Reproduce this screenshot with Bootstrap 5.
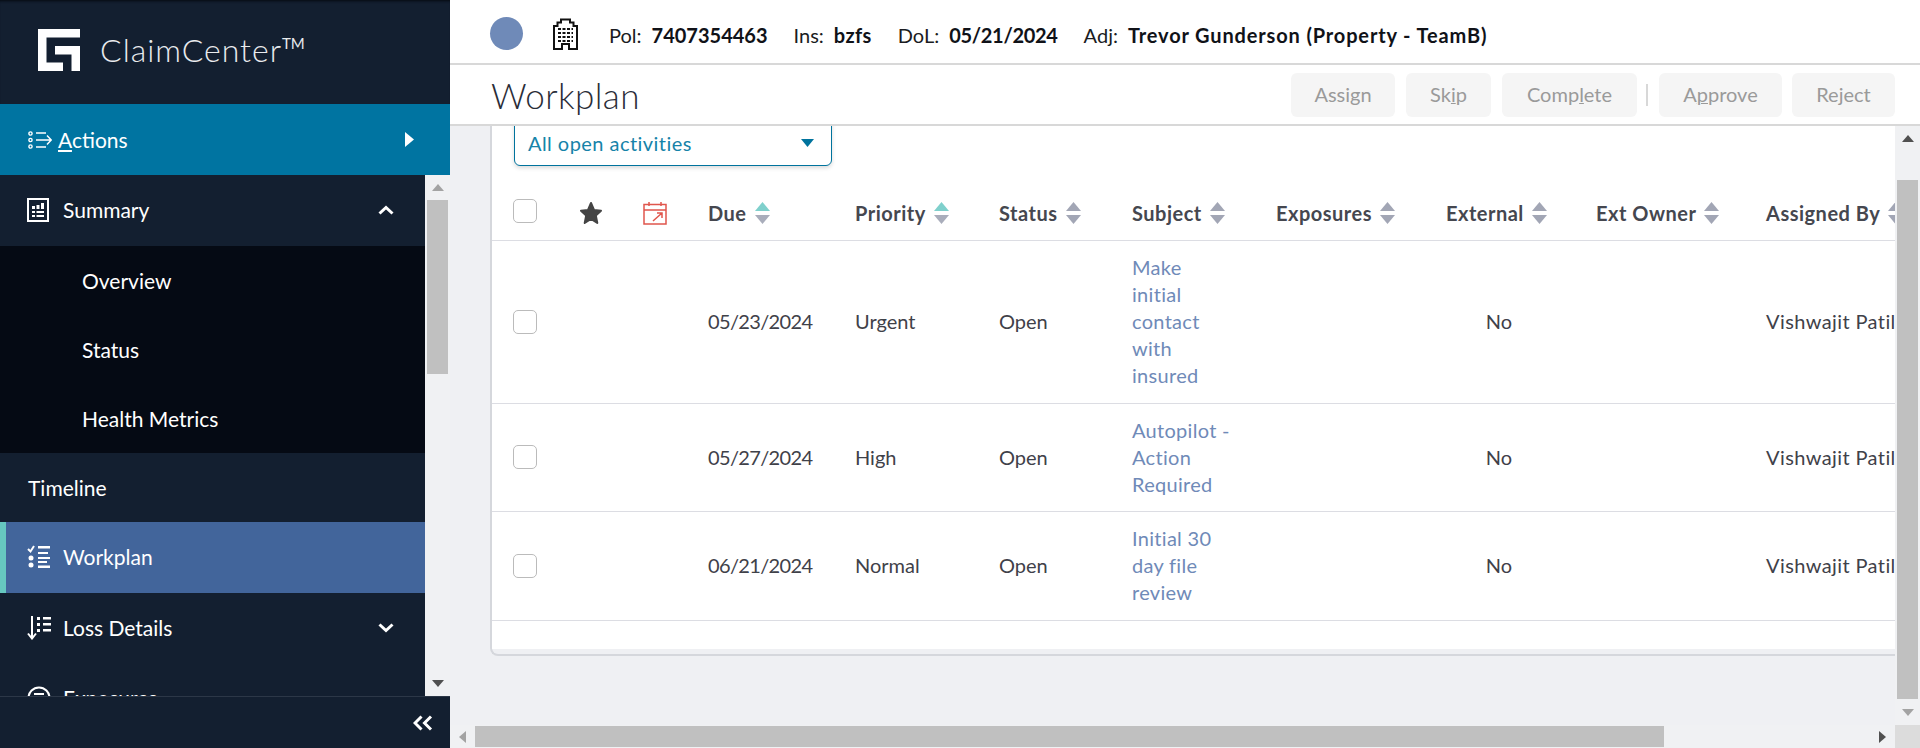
<!DOCTYPE html>
<html lang="en">
<head>
<meta charset="utf-8">
<title>Workplan</title>
<link href="https://cdn.jsdelivr.net/npm/bootstrap@5.3.0/dist/css/bootstrap.min.css" rel="stylesheet">
<style>
html,body{height:100%;overflow:hidden}
body{font-family:"Lato","Liberation Sans",sans-serif;font-size:20px;line-height:27px;background:#eff0f3;color:#3f4149}
.app-side{width:450px;flex:none;background:#131f30;color:#fff;height:748px;font-size:21px}
.side-brand{height:104px;padding:29px 0 0 38px;gap:20px;box-shadow:inset 0 3px 3px -2px #05080f}
.brand-name{font-weight:300;font-size:32px;line-height:38px;letter-spacing:1px;color:#e9ebee;margin-top:2px}
.brand-name sup{font-size:15px;top:-.85em;letter-spacing:0;font-weight:400}
.side-actions{height:71px;background:#0074a1;padding:0 36px 0 28px}
.side-actions .lbl{margin-left:6px;padding-bottom:1px}
.side-mid{height:521px}
.side-nav{width:425px;overflow:hidden}
.nav-row{height:71px;padding:0 31px 2px 27px;gap:14px;flex:none}
.nav-cut{padding-bottom:4px;gap:12px}
.nav-plain{height:69px;padding:0 0 1px 28px}
.nav-active{background:#42659b;border-left:6px solid #66c8c0;padding-left:21px;gap:12px}
.sub-wrap{background:#050a14;height:207px}
.sub-row{height:69px;padding:0 0 1px 82px}
.side-foot{height:52px;border-top:1px solid #2c3747;padding-right:17px}
.bar-v{width:25px;background:#f0f1f3;flex:none;padding:0 2px}
.bar-thumb{background:#c0c0c0}
.arrow-box{height:25px}
.app-main{min-width:0}
.claim-head{height:65px;background:#fff;border-bottom:2px solid #d8d8d8;padding:4px 0 0 40px}
.claim-head b{font-weight:700;color:#101218;margin-left:10px}
.claim-head span.kv{color:#1a1c22;margin-right:26px;white-space:nowrap;padding-top:3px}
.claim-head b.ins-val{letter-spacing:.4px}
.claim-head b.dol-val{letter-spacing:-.3px}
.claim-head b.adj-val{letter-spacing:.85px}
.claim-dot{width:33px;height:33px;border-radius:50%;background:#6f8ab8}
.title-bar{height:61px;background:#fff;border-bottom:2px solid #d8d8d8;padding:0 25px 0 41px}
.page-title{font-weight:300;font-size:35px;line-height:40px;color:#2a2d38;margin:0;letter-spacing:.4px}
.btn.act-btn,.btn.act-btn:disabled{background:#f5f5f5;border:0;border-radius:6px;color:#9a9a9a;height:44px;font-size:20px;line-height:27px;padding:0;margin-left:11px;opacity:1}
.act-btn u{text-decoration-thickness:1px}
.act-sep{width:2px;height:22px;background:#d8d8d8;margin-left:9px}
.view-body{height:599px;min-height:0}
.scroll-view{min-width:0;overflow:hidden;padding-left:40px}
.wp-panel{height:530px;background:#eff0f3;border:0;border-left:2px solid #d5d7dc;border-bottom:2px solid #d5d7dc;border-radius:0 0 0 8px;overflow:hidden}
.wp-white{height:523px;background:#fff;overflow:hidden}
.filter-box{width:318px;height:50px;margin:-10px 0 0 22px;background:#fff;border:1.5px solid #00739d;border-radius:0 0 6px 6px;box-shadow:0 2px 4px rgba(0,0,0,.15);color:#1683a9;padding:4px 17px 0 13px;font-size:20px}
.filter-box span{letter-spacing:.45px}
.wp-table{table-layout:fixed;width:1700px;margin:28px 0 0;--bs-table-bg:transparent;color:#3f4149}
.wp-table th,.wp-table td{padding:13px 16px 13.5px;border-bottom:1.5px solid #dcdde3;vertical-align:middle;font-size:20px;line-height:27px}
.wp-table th{padding:6px 16px 13px;font-weight:700;color:#45474f;white-space:nowrap;letter-spacing:.5px}
.wp-table td{color:#3f4149;white-space:nowrap}
.wp-table td.subj{white-space:normal;padding-right:29px;letter-spacing:.3px}
.wp-table td.no-cell{padding-right:28px}
.wp-table td.date-cell{letter-spacing:-.65px}
.wp-table td.name-cell{letter-spacing:.4px}
.wp-table a{color:#6f8ab8;text-decoration:none}
.wp-check{width:24px;height:24px;margin:0 0 0 5px;border-color:#bbb;border-radius:5px;display:block}
.wp-table th .wp-check{margin-top:-6px}
.sort-ic{margin-left:8px;vertical-align:-3px}
.bar-h{height:23px;background:#f0f1f3;padding:1px 0 0 0}
.bar-h .bar-thumb{width:1189px;height:21px}
.bar-corner{width:25px;background:#dcdcdc;flex:none}
.bar-fill{min-width:0}
</style>
</head>
<body class="d-flex">
<aside class="app-side d-flex flex-column">
  <div class="side-brand d-flex align-items-start">
    <svg width="42" height="42" viewBox="0 0 42 42"><path fill="#fff" d="M0 0H42V8.500H8.500V33.500H25V42H0ZM17 17H42V42H33.500V25.500H17Z"/></svg>
    <div class="brand-name">ClaimCenter<sup>TM</sup></div>
  </div>
  <div class="side-actions d-flex align-items-center justify-content-between">
    <div class="d-flex align-items-center">
      <svg width="24" height="18" viewBox="0 0 24 18" fill="none" stroke="#fff" stroke-width="1.4"><circle cx="2.500" cy="2.500" r="1.600"/><circle cx="2.500" cy="9" r="1.600"/><circle cx="2.500" cy="15.500" r="1.600"/><path d="M8 2H18M8 9H23M19 4.500L23.200 9L19 13.500M8 16H18"/></svg>
      <span class="lbl"><u>A</u>ctions</span>
    </div>
    <svg width="9" height="15" viewBox="0 0 9 15"><path fill="#fff" d="M0 0L9 7.500L0 15Z"/></svg>
  </div>
  <div class="side-mid d-flex">
    <nav class="side-nav flex-grow-1 d-flex flex-column">
      <div class="nav-row d-flex align-items-center justify-content-between">
        <div class="d-flex align-items-center" style="gap:14px">
          <svg width="22" height="24" viewBox="0 0 22 24"><path fill="none" stroke="#fff" stroke-width="2" d="M1 1H21V23H1Z"/><path fill="#fff" d="M5 8H8V11H5ZM9.500 7H12.500V11H9.500ZM14 5H17V11H14ZM5 13H8V15H5ZM9.500 13H17V15H9.500ZM5 17H8V19H5ZM9.500 17H17V19H9.500Z"/></svg>
          <span>Summary</span>
        </div>
        <svg width="16" height="10" viewBox="0 0 16 10"><path fill="none" stroke="#fff" stroke-width="3" d="M1.500 8.500L8 2.500L14.500 8.500"/></svg>
      </div>
      <div class="sub-wrap flex-shrink-0">
        <div class="sub-row d-flex align-items-center">Overview</div>
        <div class="sub-row d-flex align-items-center">Status</div>
        <div class="sub-row d-flex align-items-center">Health Metrics</div>
      </div>
      <div class="nav-plain d-flex align-items-center flex-shrink-0">Timeline</div>
      <div class="nav-row nav-active d-flex align-items-center">
        <svg width="24" height="23" viewBox="0 0 24 23"><path fill="none" stroke="#fff" stroke-width="2" d="M1 4L3.500 6.500L7 1"/><circle cx="4" cy="13" r="2.500" fill="#fff"/><circle cx="4" cy="20" r="2.500" fill="#fff"/><path fill="#fff" d="M11 1H23V3.500H11ZM11 7H21V9H11ZM11 12H23V14H11ZM11 16H20V18H11ZM11 20.500H23V23H11Z"/></svg>
        <span>Workplan</span>
      </div>
      <div class="nav-row d-flex align-items-center justify-content-between">
        <div class="d-flex align-items-center" style="gap:12px">
          <svg width="24" height="24" viewBox="0 0 24 24"><path fill="none" stroke="#fff" stroke-width="2" d="M5 0V22M1 17.500L5 22.500L9 17.500"/><path fill="#fff" d="M10 1H13V4H10ZM16 1H24V3.500H16ZM10 7H13V10H10ZM16 7H24V9.500H16ZM10 13H13V16H10ZM16 13H24V15.500H16Z"/></svg>
          <span>Loss Details</span>
        </div>
        <svg width="16" height="10" viewBox="0 0 16 10"><path fill="none" stroke="#fff" stroke-width="3" d="M1.500 1.500L8 7.500L14.500 1.500"/></svg>
      </div>
      <div class="nav-row nav-cut d-flex align-items-center">
        <svg width="24" height="24" viewBox="0 0 24 24"><circle cx="12" cy="12" r="10.500" fill="none" stroke="#fff" stroke-width="2"/><path fill="#fff" d="M7 7H17V9H7ZM7 11H17V13H7Z"/></svg>
        <span>Exposures</span>
      </div>
    </nav>
    <div class="bar-v d-flex flex-column">
      <div class="arrow-box d-flex align-items-center justify-content-center"><svg width="12" height="7" viewBox="0 0 12 7"><path fill="#a3a3a3" d="M6 0L12 7H0Z"/></svg></div>
      <div class="bar-thumb" style="height:174px"></div>
      <div class="flex-grow-1"></div>
      <div class="arrow-box d-flex align-items-center justify-content-center"><svg width="12" height="7" viewBox="0 0 12 7"><path fill="#505050" d="M6 7L12 0H0Z"/></svg></div>
    </div>
  </div>
  <div class="side-foot d-flex align-items-center justify-content-end">
    <svg width="20" height="16" viewBox="0 0 20 16"><path fill="none" stroke="#fff" stroke-width="3" d="M8.500 1.500L2 8L8.500 14.500M18 1.500L11.500 8L18 14.500"/></svg>
  </div>
</aside>

<div class="app-main flex-grow-1 d-flex flex-column">
  <header class="claim-head d-flex align-items-center">
    <div class="claim-dot flex-shrink-0" style="margin-right:30px"></div>
    <svg width="25" height="32" viewBox="0 0 25 32" style="margin-right:31px" fill="none" stroke="#111" stroke-width="2"><path d="M1 31V8H4.500V4.500H8V1.500H17V4.500H20.500V8H24V31H16V26H9V31Z"/><path stroke-width="2.200" stroke-dasharray="3 1.500" d="M5 11H20M5 15H20M5 19H20M5 23H20"/></svg>
    <span class="kv">Pol:<b>7407354463</b></span>
    <span class="kv">Ins:<b class="ins-val">bzfs</b></span>
    <span class="kv">DoL:<b class="dol-val">05/21/2024</b></span>
    <span class="kv">Adj:<b class="adj-val">Trevor Gunderson (Property - TeamB)</b></span>
  </header>
  <div class="title-bar d-flex align-items-center justify-content-between">
    <h1 class="page-title">Workplan</h1>
    <div class="d-flex align-items-center">
      <button class="btn act-btn" disabled style="width:104px">Assign</button>
      <button class="btn act-btn" disabled style="width:85px">Sk<u>i</u>p</button>
      <button class="btn act-btn" disabled style="width:135px">Comp<u>l</u>ete</button>
      <div class="act-sep"></div>
      <button class="btn act-btn" disabled style="width:123px">A<u>p</u>prove</button>
      <button class="btn act-btn" disabled style="width:103px;margin-left:10px">Reject</button>
    </div>
  </div>
  <div class="view-body d-flex">
    <div class="scroll-view flex-grow-1">
      <div class="card wp-panel">
        <div class="wp-white">
          <div class="filter-box d-flex align-items-center justify-content-between">
            <span>All open activities</span>
            <svg width="13" height="8" viewBox="0 0 13 8"><path fill="#00739d" d="M0 0H13L6.500 8Z"/></svg>
          </div>
          <table class="table wp-table">
            <colgroup><col style="width:76px"><col style="width:72px"><col style="width:52px"><col style="width:147px"><col style="width:144px"><col style="width:133px"><col style="width:144px"><col style="width:170px"><col style="width:150px"><col style="width:170px"><col></colgroup>
            <thead>
              <tr>
                <th><input class="form-check-input wp-check" type="checkbox" aria-label="Select all"></th>
                <th><svg width="24" height="24" viewBox="0 0 24 24" class="d-block" style="margin:-1px 0 0 -5px"><path fill="#444" stroke="#444" stroke-width="2" stroke-linejoin="round" d="M12 2L15 9L22 9.700L16.800 14.500L18.300 22L12 18L5.700 22L7.200 14.500L2 9.700L9 9Z"/></svg></th>
                <th><svg width="24" height="24" viewBox="0 0 24 24" class="d-block" style="margin:-1px -10px 0 -13px" fill="none" stroke="#e0564c" stroke-width="1.500"><path d="M1 3.500H23V23H1ZM1 9H23M6 1V5M18 1V5M10 20L19 12M14 12H19V17"/></svg></th>
                <th>Due<svg class="sort-ic" width="15" height="22" viewBox="0 0 15 22"><path fill="#7fd0cc" d="M7.500 0L15 9H0Z"/><path fill="#a9adbb" d="M7.500 22L15 13H0Z"/></svg></th>
                <th>Priority<svg class="sort-ic" width="15" height="22" viewBox="0 0 15 22"><path fill="#7fd0cc" d="M7.500 0L15 9H0Z"/><path fill="#a9adbb" d="M7.500 22L15 13H0Z"/></svg></th>
                <th>Status<svg class="sort-ic" width="15" height="22" viewBox="0 0 15 22"><path fill="#a2a6b5" d="M7.500 0L15 9H0Z"/><path fill="#a2a6b5" d="M7.500 22L15 13H0Z"/></svg></th>
                <th>Subject<svg class="sort-ic" width="15" height="22" viewBox="0 0 15 22"><path fill="#a2a6b5" d="M7.500 0L15 9H0Z"/><path fill="#a2a6b5" d="M7.500 22L15 13H0Z"/></svg></th>
                <th>Exposures<svg class="sort-ic" width="15" height="22" viewBox="0 0 15 22"><path fill="#a2a6b5" d="M7.500 0L15 9H0Z"/><path fill="#a2a6b5" d="M7.500 22L15 13H0Z"/></svg></th>
                <th>External<svg class="sort-ic" width="15" height="22" viewBox="0 0 15 22"><path fill="#a2a6b5" d="M7.500 0L15 9H0Z"/><path fill="#a2a6b5" d="M7.500 22L15 13H0Z"/></svg></th>
                <th>Ext Owner<svg class="sort-ic" width="15" height="22" viewBox="0 0 15 22"><path fill="#a2a6b5" d="M7.500 0L15 9H0Z"/><path fill="#a2a6b5" d="M7.500 22L15 13H0Z"/></svg></th>
                <th>Assigned By<svg class="sort-ic" width="15" height="22" viewBox="0 0 15 22"><path fill="#a2a6b5" d="M7.500 0L15 9H0Z"/><path fill="#a2a6b5" d="M7.500 22L15 13H0Z"/></svg></th>
              </tr>
            </thead>
            <tbody>
              <tr>
                <td><input class="form-check-input wp-check" type="checkbox" aria-label="Select"></td><td></td><td></td>
                <td class="date-cell">05/23/2024</td><td>Urgent</td><td>Open</td>
                <td class="subj"><a href="#">Make initial contact with insured</a></td>
                <td></td><td class="text-center no-cell">No</td><td></td><td class="name-cell">Vishwajit Patil</td>
              </tr>
              <tr>
                <td><input class="form-check-input wp-check" type="checkbox" aria-label="Select"></td><td></td><td></td>
                <td class="date-cell">05/27/2024</td><td>High</td><td>Open</td>
                <td class="subj"><a href="#">Autopilot - Action Required</a></td>
                <td></td><td class="text-center no-cell">No</td><td></td><td class="name-cell">Vishwajit Patil</td>
              </tr>
              <tr>
                <td><input class="form-check-input wp-check" type="checkbox" aria-label="Select"></td><td></td><td></td>
                <td class="date-cell">06/21/2024</td><td>Normal</td><td>Open</td>
                <td class="subj"><a href="#">Initial 30 day file review</a></td>
                <td></td><td class="text-center no-cell">No</td><td></td><td class="name-cell">Vishwajit Patil</td>
              </tr>
            </tbody>
          </table>
        </div>
      </div>
    </div>
    <div class="bar-v d-flex flex-column">
      <div class="arrow-box d-flex align-items-center justify-content-center"><svg width="12" height="7" viewBox="0 0 12 7"><path fill="#505050" d="M6 0L12 7H0Z"/></svg></div>
      <div style="height:29px"></div>
      <div class="bar-thumb" style="height:519px"></div>
      <div class="flex-grow-1 d-flex align-items-center justify-content-center"><svg width="12" height="7" viewBox="0 0 12 7"><path fill="#a3a3a3" d="M6 7L12 0H0Z"/></svg></div>
    </div>
  </div>
  <div class="d-flex flex-shrink-0" style="height:23px">
    <div class="bar-h bar-fill flex-grow-1 d-flex">
      <svg width="7" height="12" viewBox="0 0 7 12" style="margin:5px 0 0 9px;flex:none"><path fill="#a3a3a3" d="M0 6L7 0V12Z"/></svg>
      <div class="bar-thumb flex-shrink-0" style="margin-left:9px"></div>
      <div class="flex-grow-1"></div>
      <svg width="7" height="12" viewBox="0 0 7 12" style="margin:5px 9px 0 0;flex:none"><path fill="#505050" d="M7 6L0 0V12Z"/></svg>
    </div>
    <div class="bar-corner"></div>
  </div>
</div>
<script src="https://cdn.jsdelivr.net/npm/bootstrap@5.3.0/dist/js/bootstrap.bundle.min.js"></script>
</body>
</html>
